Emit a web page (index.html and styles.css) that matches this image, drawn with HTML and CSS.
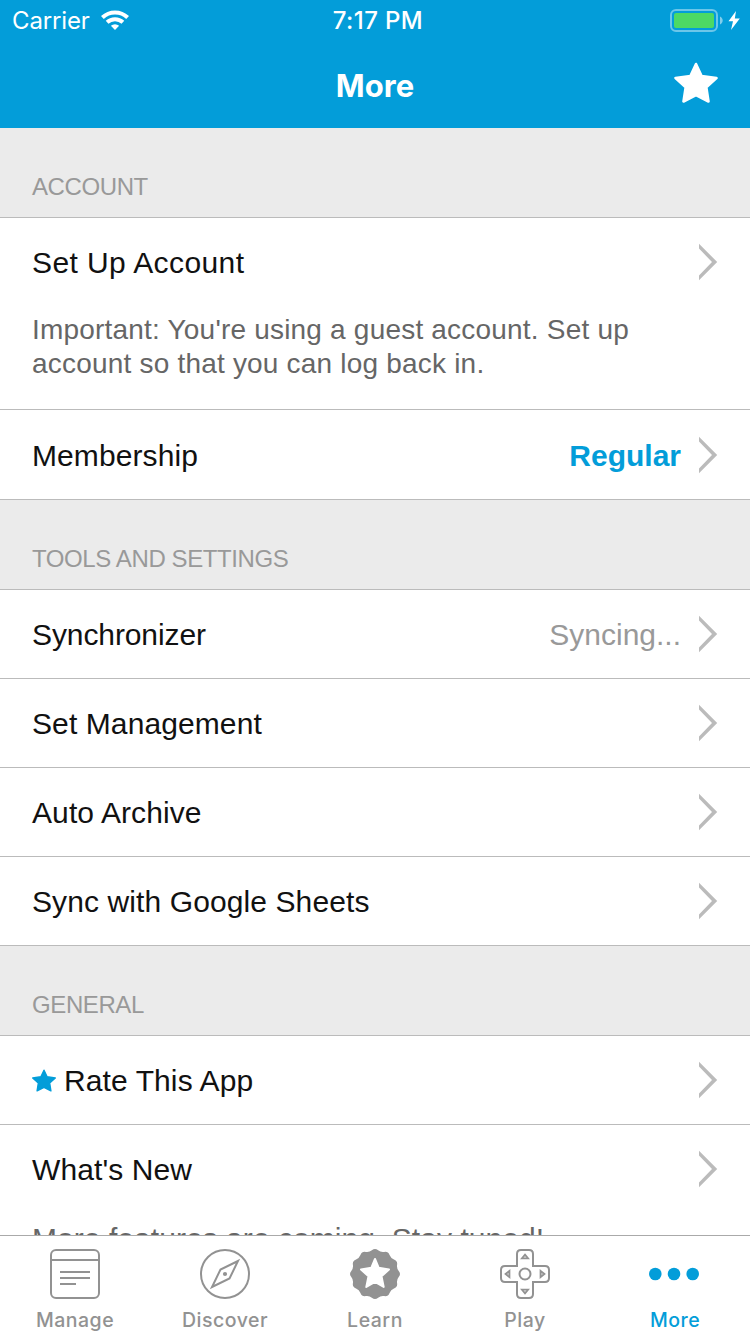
FILE: index.html
```html
<!DOCTYPE html>
<html lang="en">
<head>
<meta charset="utf-8">
<title>More</title>
<link rel="stylesheet" href="styles.css">
</head>
<body>
<svg class="defs" width="0" height="0" aria-hidden="true">
  <defs>
    <symbol id="chevron" viewBox="0 0 20 38"><path d="M1 .8V5.600L14 19 1 32.400V37.200L19.200 19Z" fill="#bbb"/></symbol>
    <symbol id="star" viewBox="0 0 46 43"><path d="M23 3 28.6 15 43.5 17 33.3 26.3 35.5 40.5 23 34 10.5 40.5 12.7 26.3 2.500 17 17.400 15Z" fill="currentColor" stroke="currentColor" stroke-width="2.600" stroke-linejoin="round"/></symbol>
  </defs>
</svg>
<div class="screen">
  <header class="top">
    <div class="status">
      <div class="carrier"><span class="carrier-name">Carrier</span>
        <svg class="wifi" width="28" height="20" viewBox="0 0 28 20"><g fill="none" stroke="#fff" stroke-width="4"><path d="M1.400 7.500A18.300 18.300 0 0 1 26.600 7.500"/><path d="M6.100 12.300A11.600 11.600 0 0 1 21.900 12.300"/></g><path d="M9.900 15.800a6 6 0 0 1 8.200 0L14 20Z" fill="#fff"/></svg>
      </div>
      <span class="clock">7:17 PM</span>
      <svg class="battery" width="72" height="24" viewBox="0 0 72 24"><rect x="1" y="1" width="46" height="21" rx="5" fill="none" stroke="#fff" stroke-opacity=".42" stroke-width="2"/><rect x="4" y="4" width="40" height="15" rx="2" fill="#4cd964"/><path d="M50 7.500c3.600 1.700 3.600 6.300 0 8Z" fill="#fff" fill-opacity=".5"/><path d="M66 2 58.500 12.200H63L61 21 69.800 9.500H64.800Z" fill="#fff"/></svg>
    </div>
    <div class="nav"><h1 class="title">More</h1><svg class="nav-star" width="46" height="43"><use href="#star"/></svg></div>
  </header>
  <main class="content">
    <h2 class="section">ACCOUNT</h2>
    <div class="row tall">
      <div class="line"><span class="label loose">Set Up Account</span><svg class="chevron"><use href="#chevron"/></svg></div>
      <p class="note">Important: You're using a guest account. Set up<br>account so that you can log back in.</p>
    </div>
    <div class="row member"><div class="line"><span class="label">Membership</span><span class="value strong">Regular</span><svg class="chevron"><use href="#chevron"/></svg></div></div>
    <h2 class="section">TOOLS AND SETTINGS</h2>
    <div class="row"><div class="line"><span class="label tight">Synchronizer</span><span class="value">Syncing...</span><svg class="chevron"><use href="#chevron"/></svg></div></div>
    <div class="row"><div class="line"><span class="label">Set Management</span><svg class="chevron"><use href="#chevron"/></svg></div></div>
    <div class="row"><div class="line"><span class="label">Auto Archive</span><svg class="chevron"><use href="#chevron"/></svg></div></div>
    <div class="row"><div class="line"><span class="label">Sync with Google Sheets</span><svg class="chevron"><use href="#chevron"/></svg></div></div>
    <h2 class="section">GENERAL</h2>
    <div class="row"><div class="line"><svg class="rate-star" width="24" height="23" viewBox="1.200 1.500 43.600 40.500"><use href="#star" width="46" height="43"/></svg><span class="label">Rate This App</span><svg class="chevron"><use href="#chevron"/></svg></div></div>
    <div class="row tall">
      <div class="line"><span class="label">What's New</span><svg class="chevron"><use href="#chevron"/></svg></div>
      <p class="note news">More features are coming. Stay tuned!</p>
    </div>
  </main>
  <nav class="tabs">
    <a class="tab"><svg width="50" height="50" viewBox="0 0 50 50"><g fill="none" stroke="currentColor" stroke-width="2"><rect x="1" y="1" width="48" height="48" rx="5"/><path d="M1 11H49M10 23H40M10 29H40M10 35H26"/></g></svg><span class="tab-name">Manage</span></a>
    <a class="tab"><svg width="50" height="50" viewBox="0 0 50 50"><g fill="none" stroke="currentColor" stroke-width="2"><circle cx="25" cy="25" r="24"/><path d="M38 12 20.500 20.500 12 38 29.500 29.500Z"/></g><circle cx="25" cy="25" r="2.100" fill="currentColor"/></svg><span class="tab-name">Discover</span></a>
    <a class="tab"><svg width="50" height="50" viewBox="-25 -25 50 50"><path fill="currentColor" d="M-3.120-23.700Q0-26.300 3.120-23.700Q5.770-21.540 9.150-22.080Q13.150-22.780 14.550-18.960Q15.770-15.770 18.960-14.550Q22.780-13.150 22.080-9.150Q21.540-5.770 23.700-3.120Q26.300 0 23.700 3.120Q21.540 5.770 22.080 9.150Q22.780 13.150 18.960 14.550Q15.770 15.770 14.550 18.960Q13.150 22.780 9.150 22.080Q5.770 21.540 3.120 23.700Q0 26.300-3.120 23.700Q-5.770 21.540-9.150 22.080Q-13.150 22.780-14.550 18.960Q-15.770 15.770-18.960 14.550Q-22.780 13.150-22.080 9.150Q-21.540 5.770-23.700 3.120Q-26.300 0-23.700-3.120Q-21.540-5.770-22.080-9.150Q-22.780-13.150-18.960-14.550Q-15.770-15.770-14.550-18.960Q-13.150-22.780-9.150-22.080Q-5.770-21.540-3.120-23.700Z"/><path d="M0-15 3.600-6.300 14-4.500 6.500 2.300 8.700 13 0 8-8.700 13-6.500 2.300-14-4.500-3.600-6.300Z" fill="#fff" stroke="#fff" stroke-width="2" stroke-linejoin="round"/></svg><span class="tab-name">Learn</span></a>
    <a class="tab"><svg width="50" height="50" viewBox="0 0 50 50"><g fill="none" stroke="currentColor" stroke-width="2"><path d="M21 1H29Q33 1 33 5V17H45Q49 17 49 21V29Q49 33 45 33H33V45Q33 49 29 49H21Q17 49 17 45V33H5Q1 33 1 29V21Q1 17 5 17H17V5Q17 1 21 1Z"/><circle cx="25" cy="25" r="5.500"/></g><g fill="currentColor" fill-opacity=".45" stroke="currentColor" stroke-width="1.700"><path d="M25 5.500 28.200 9.500H21.800ZM25 44.500 28.200 40.500H21.800ZM5.500 25 9.500 21.800V28.200ZM44.500 25 40.500 21.800V28.200Z"/></g></svg><span class="tab-name">Play</span></a>
    <a class="tab active"><svg class="dots" width="52" height="50" viewBox="0 0 52 50"><g fill="currentColor"><circle cx="6.300" cy="25" r="6.300"/><circle cx="25" cy="25" r="6.300"/><circle cx="43.700" cy="25" r="6.300"/></g></svg><span class="tab-name">More</span></a>
  </nav>
</div>
</body>
</html>
```
FILE: styles.css
```css
* { box-sizing: border-box; }
body { margin: 0; background: #fff; font-family: "Liberation Sans", Arial, sans-serif; }
.defs { display: block; }
.screen { width: 750px; height: 1334px; display: flex; flex-direction: column; overflow: hidden; }
.top { height: 128px; flex: none; background: #039dd9; color: #fff; font-family: Inter, sans-serif; }
.status { height: 41px; padding: 1px 8px 0 12px; display: grid; grid-template-columns: 1fr auto 1fr; align-items: center; font-size: 24px; line-height: 40px; }
.carrier { display: flex; align-items: center; gap: 11px; }
.carrier-name { letter-spacing: -.15px; }
.wifi { margin-top: -2px; }
.clock { padding-left: 2px; font-weight: 500; letter-spacing: .4px; }
.battery { justify-self: end; }
.nav { height: 87px; padding: 0 31px; display: grid; grid-template-columns: 1fr auto 1fr; align-items: center; }
.title { grid-column: 2; margin: 2px 0 0; font-size: 31px; line-height: 40px; font-weight: 700; letter-spacing: .05px; }
.nav-star { justify-self: end; margin-top: -4px; }
.content { flex: 1; min-height: 0; overflow: hidden; }
.section { height: 90px; margin: 0; padding: 45px 32px 0; background: #ebebeb; border-bottom: 1px solid #bbb; color: #999; font-size: 24px; line-height: 28px; font-weight: 400; letter-spacing: -.4px; }
.row { height: 89px; padding: 0 32px; border-bottom: 1px solid #bbb; }
.row.member { height: 90px; }
.row.tall { height: 192px; }
.line { height: 88px; display: flex; align-items: center; }
.member .line { height: 90px; }
.label { flex: 1; padding-top: 2px; color: #111; font-size: 30px; line-height: 36px; letter-spacing: .1px; }
.loose { letter-spacing: .4px; }
.tight { letter-spacing: -.1px; }
.value { padding-top: 2px; color: #999; font-size: 30px; line-height: 36px; }
.strong { color: #039dd9; font-weight: 700; }
.chevron { width: 20px; height: 38px; margin-left: 17px; flex: none; }
.rate-star { color: #039dd9; margin-right: 8px; }
.note { margin: 7px 0 0; color: #666; font-size: 28px; line-height: 34px; letter-spacing: .2px; }
.news { margin-top: 9px; font-size: 30px; letter-spacing: .05px; white-space: nowrap; }
.tabs { height: 99px; flex: none; display: grid; grid-template-columns: repeat(5, 1fr); background: #fff; border-top: 1px solid #aaa; }
.tab { display: flex; flex-direction: column; align-items: center; padding-top: 13px; gap: 9px; color: #929292; font-family: Inter, sans-serif; font-size: 19.5px; line-height: 24px; font-weight: 500; letter-spacing: .5px; }
.tab.active { color: #039dd9; }
```
